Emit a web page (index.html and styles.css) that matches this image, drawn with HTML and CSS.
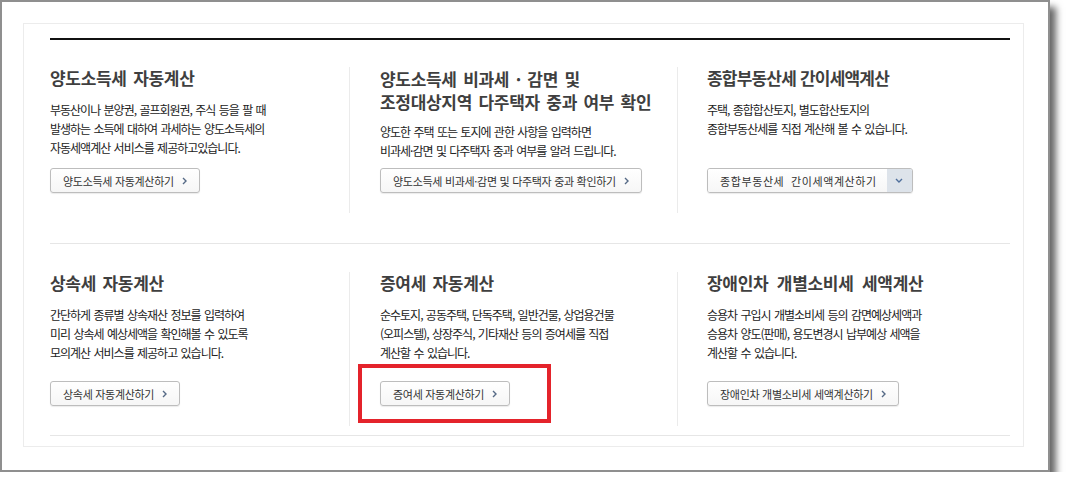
FILE: index.html
```html
<!DOCTYPE html>
<html lang="ko">
<head>
    <meta charset="UTF-8">
    <meta name="viewport" content="width=device-width, initial-scale=1.0">
    <title>세금 모의계산</title>
    <link rel="stylesheet" href="styles.css">
</head>
<body>
    <div class="shot">
        <div class="panel">
            <div class="calc-row calc-row--first">
                <div class="calc-col">
                    <h3 class="calc-title">양도소득세 자동계산</h3>
                    <p class="calc-desc">부동산이나 분양권, 골프회원권, 주식 등을 팔 때<br>발생하는 소득에 대하여 과세하는 양도소득세의<br>자동세액계산 서비스를 제공하고있습니다.</p>
                    <a href="#" class="calc-btn">양도소득세 자동계산하기<svg class="chev" width="5" height="8" viewBox="0 0 5 8"><path d="M1 1l3 3-3 3" fill="none" stroke="#566a86" stroke-width="1.4"/></svg></a>
                </div>
                <div class="calc-col">
                    <h3 class="calc-title calc-title--two">양도소득세 비과세 · 감면 및<br>조정대상지역 다주택자 중과 여부 확인</h3>
                    <p class="calc-desc">양도한 주택 또는 토지에 관한 사항을 입력하면<br>비과세·감면 및 다주택자 중과 여부를 알려 드립니다.</p>
                    <a href="#" class="calc-btn">양도소득세 비과세·감면 및 다주택자 중과 확인하기<svg class="chev" width="5" height="8" viewBox="0 0 5 8"><path d="M1 1l3 3-3 3" fill="none" stroke="#566a86" stroke-width="1.4"/></svg></a>
                </div>
                <div class="calc-col">
                    <h3 class="calc-title calc-title--tight">종합부동산세 간이세액계산</h3>
                    <p class="calc-desc">주택, 종합합산토지, 별도합산토지의<br>종합부동산세를 직접 계산해 볼 수 있습니다.</p>
                    <div class="calc-split">
                        <a href="#" class="calc-split-main">종합부동산세 간이세액계산하기</a>
                        <span class="calc-split-toggle"><svg width="8" height="5" viewBox="0 0 8 5"><path d="M1 1l3 3 3-3" fill="none" stroke="#4f6f9c" stroke-width="1.4"/></svg></span>
                    </div>
                </div>
            </div>
            <div class="calc-row calc-row--last">
                <div class="calc-col">
                    <h3 class="calc-title">상속세 자동계산</h3>
                    <p class="calc-desc">간단하게 종류별 상속재산 정보를 입력하여<br>미리 상속세 예상세액을 확인해볼 수 있도록<br>모의계산 서비스를 제공하고 있습니다.</p>
                    <a href="#" class="calc-btn">상속세 자동계산하기<svg class="chev" width="5" height="8" viewBox="0 0 5 8"><path d="M1 1l3 3-3 3" fill="none" stroke="#566a86" stroke-width="1.4"/></svg></a>
                </div>
                <div class="calc-col">
                    <h3 class="calc-title">증여세 자동계산</h3>
                    <p class="calc-desc">순수토지, 공동주택, 단독주택, 일반건물, 상업용건물<br>(오피스텔), 상장주식, 기타재산 등의 증여세를 직접<br>계산할 수 있습니다.</p>
                    <a href="#" class="calc-btn marked">증여세 자동계산하기<svg class="chev" width="5" height="8" viewBox="0 0 5 8"><path d="M1 1l3 3-3 3" fill="none" stroke="#566a86" stroke-width="1.4"/></svg></a>
                </div>
                <div class="calc-col">
                    <h3 class="calc-title calc-title--wide">장애인차 개별소비세 세액계산</h3>
                    <p class="calc-desc">승용차 구입시 개별소비세 등의 감면예상세액과<br>승용차 양도(판매), 용도변경시 납부예상 세액을<br>계산할 수 있습니다.</p>
                    <a href="#" class="calc-btn">장애인차 개별소비세 세액계산하기<svg class="chev" width="5" height="8" viewBox="0 0 5 8"><path d="M1 1l3 3-3 3" fill="none" stroke="#566a86" stroke-width="1.4"/></svg></a>
                </div>
            </div>
        </div>
    </div>
</body>
</html>
```

FILE: styles.css
```css
body {
    margin: 0;
    background-color: white;
    font-family: "Noto Sans CJK KR", "Noto Sans", sans-serif;
    color: #222;
    overflow: hidden;
}
.shot {
    width: 1001px;
    height: 423px;
    padding: 21px 24px 24px 21px;
    border: 2px solid #8f8f8f;
    background-color: white;
    box-shadow: 6px 7px 7px rgba(0, 0, 0, 0.6);
}
.panel {
    height: 408px;
    border: 1px solid #ececec;
    padding: 14px 13px 0 26px;
}
.calc-row {
    display: grid;
    grid-template-columns: 299px 328px 1fr;
    padding: 27px 0 30px;
    border-bottom: 1px solid #e6e6e6;
}
.calc-row--first {
    border-top: 2px solid #111;
}
.calc-row--last {
    padding: 28px 0 9px;
}
.calc-col {
    display: flex;
    flex-direction: column;
    min-height: 126px;
    padding: 0 0 20px 30px;
    border-left: 1px solid #ebebeb;
}
.calc-col:first-child {
    padding-left: 0;
    border-left: none;
}
.calc-col:last-child {
    padding-left: 29px;
}
.calc-row--last .calc-col {
    min-height: 134px;
}
.calc-title {
    margin: 0 0 11px;
    font-size: 17px;
    line-height: 22px;
    font-weight: bold;
    color: #3f3f3f;
    letter-spacing: -0.3px;
    word-spacing: 2px;
}
.calc-title--two {
    line-height: 23px;
    margin-bottom: 9px;
}
.calc-title--tight {
    letter-spacing: -0.8px;
    word-spacing: 0;
}
.calc-title--wide {
    word-spacing: 4px;
}
.calc-desc {
    margin: 0 0 8px;
    font-size: 12px;
    line-height: 19px;
    letter-spacing: -1px;
    word-spacing: 1px;
    color: #222;
}
.calc-btn {
    margin-top: auto;
    align-self: flex-start;
    display: flex;
    align-items: center;
    height: 23px;
    padding: 0 12px;
    border: 1px solid #bdbdbd;
    border-radius: 3px;
    background: linear-gradient(#fff, #f6f6f6);
    box-shadow: 0 1px 1px rgba(0, 0, 0, 0.08);
    font-size: 11px;
    letter-spacing: -0.3px;
    color: #333;
    text-decoration: none;
    white-space: nowrap;
}
.calc-btn .chev {
    margin-left: 8px;
}

/* split button with dropdown toggle */
.calc-split {
    margin-top: auto;
    align-self: flex-start;
    display: flex;
    height: 23px;
    border: 1px solid #bdbdbd;
    border-radius: 3px;
    overflow: hidden;
    box-shadow: 0 1px 1px rgba(0, 0, 0, 0.08);
}
.calc-split-main {
    display: flex;
    align-items: center;
    padding: 0 10px 0 12px;
    background: linear-gradient(#fff, #f6f6f6);
    font-size: 11px;
    letter-spacing: 0.6px;
    word-spacing: 3px;
    color: #333;
    text-decoration: none;
    white-space: nowrap;
}
.calc-split-toggle {
    display: flex;
    align-items: center;
    justify-content: center;
    width: 25px;
    background-color: #dde3ea;
}

/* red annotation box drawn over the highlighted button */
.marked {
    position: relative;
    overflow: visible;
}
.marked::after {
    content: "";
    position: absolute;
    left: -23px;
    top: -18px;
    right: -42px;
    bottom: -18px;
    border: 4px solid #e4232b;
}
```
